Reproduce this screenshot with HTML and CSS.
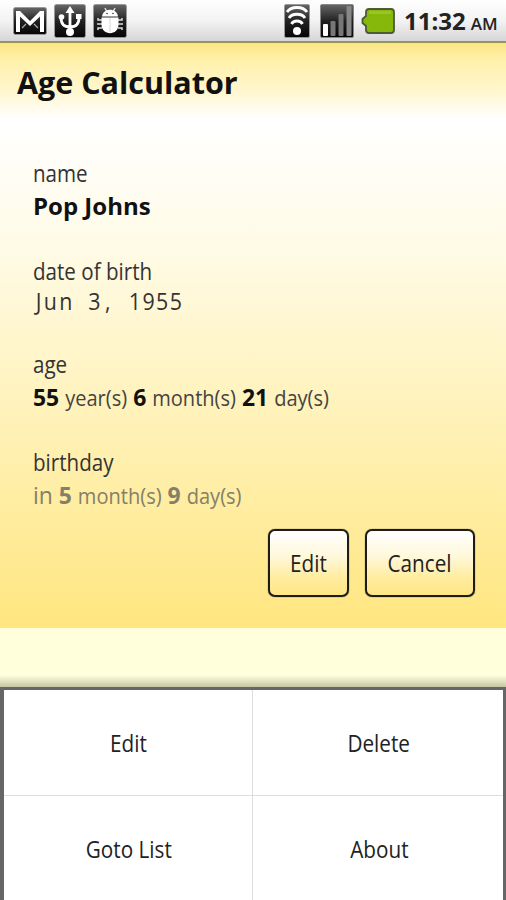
FILE: index.html
```html
<!DOCTYPE html>
<html lang="en">
<head>
    <meta charset="UTF-8">
    <meta name="viewport" content="width=device-width, initial-scale=1.0">
    <title>Age Calculator</title>
    <link rel="stylesheet" href="styles.css">
</head>
<body>

    <div class="status-bar">
        <svg class="icon-mail" width="34" height="28" viewBox="0 0 34 28">
            <defs>
                <linearGradient id="dark" x1="0" y1="0" x2="0" y2="1">
                    <stop offset="0" stop-color="#666"/>
                    <stop offset="0.5" stop-color="#222"/>
                    <stop offset="1" stop-color="#050505"/>
                </linearGradient>
            </defs>
            <rect x="0.5" y="0.5" width="33" height="27" rx="2" fill="url(#dark)" stroke="#999"/>
            <path d="M3 25V4h4l10 10L27 4h4v21h-4V9.500L17 19 7 9.500V25z" fill="#fff"/>
            <path d="M9 21l4-4M25 21l-4-4" stroke="#aaa" stroke-width="1.2"/>
        </svg>
        <svg class="icon-usb" width="32" height="34" viewBox="0 0 32 34">
            <rect x="0.5" y="0.5" width="31" height="33" rx="2" fill="url(#dark)" stroke="#999"/>
            <path d="M16 28V7M16 23c-6 0-9-3-9-9M16 23c6 0 9-3 9-9" fill="none" stroke="#fff" stroke-width="2.8"/>
            <path d="M11.500 9L16 2l4.500 7z" fill="#fff"/>
            <circle cx="16" cy="28" r="4" fill="#fff"/>
            <circle cx="7.500" cy="13" r="2.8" fill="#fff"/>
            <rect x="22" y="10" width="5.500" height="5" fill="#fff"/>
        </svg>
        <svg class="icon-bug" width="34" height="34" viewBox="0 0 34 34">
            <rect x="0.5" y="0.5" width="33" height="33" rx="2" fill="url(#dark)" stroke="#999"/>
            <path d="M12 4l2 4M22 4l-2 4M9 16H5v-2M9 20H4M9 24H5v2M25 16h4v-2M25 20h5M25 24h4v2" fill="none" stroke="#ddd" stroke-width="1.5"/>
            <path d="M9 12.500c1-9 15-9 16 0z" fill="#fff"/>
            <path d="M8.500 13.500h17v7c0 11.500-17 11.500-17 0z" fill="#fff"/>
            <path d="M17 14v14" stroke="#ccc" stroke-width="0.8"/>
            <circle cx="14" cy="9.500" r="0.8" fill="#333"/>
            <circle cx="20" cy="9.500" r="0.8" fill="#333"/>
        </svg>
        <svg class="icon-wifi" width="26" height="34" viewBox="0 0 26 34">
            <rect x="0.5" y="0.5" width="25" height="33" rx="1.500" fill="url(#dark)" stroke="#999"/>
            <path d="M3 8c4-6 16-6 20 0M5 14c3-5 13-5 16 0M7.500 20c2-4 9-4 11 0" fill="none" stroke="#fff" stroke-width="2.800"/>
            <circle cx="13" cy="27" r="4" fill="#fff"/>
        </svg>
        <svg class="icon-signal" width="34" height="34" viewBox="0 0 34 34">
            <rect x="0.5" y="0.5" width="33" height="33" rx="1.500" fill="url(#dark)" stroke="#888"/>
            <rect x="3" y="20" width="5" height="12" rx="1" fill="#fff"/>
            <rect x="10.500" y="17" width="5" height="15" rx="1" fill="#777"/>
            <rect x="18.500" y="10" width="5" height="22" rx="1" fill="#777"/>
            <rect x="26.500" y="2" width="5" height="30" rx="1" fill="#888"/>
        </svg>
        <svg class="icon-battery" width="34" height="26" viewBox="0 0 34 26">
            <path d="M8 1h22q3 0 3 3v18q0 3-3 3H8q-3 0-3-3v-4L1.500 15v-4L5 8V4q0-3 3-3z" fill="#86b80c" stroke="#4c5a35" stroke-width="1.800"/>
            <path d="M8 3h22v3H8z" fill="#98c42a"/>
        </svg>
        <div class="clock">11:32<span class="ampm">AM</span></div>
    </div>

    <header>
        <h1>Age Calculator</h1>
    </header>

    <main>
        <div class="field">
            <div class="label">name</div>
            <div class="value name">Pop Johns</div>
        </div>
        <div class="field field-date">
            <div class="label">date of birth</div>
            <div class="value date"><span class="month">Jun</span> <span class="day">3,</span> 1955</div>
        </div>
        <div class="field">
            <div class="label">age</div>
            <div class="value"><b>55</b> <small>year(s)</small> <b>6</b> <small>month(s)</small> <b>21</b> <small>day(s)</small></div>
        </div>
        <div class="field">
            <div class="label">birthday</div>
            <div class="value birthday">in <b>5</b> <small>month(s)</small> <b>9</b> <small>day(s)</small></div>
        </div>
        <div class="buttons">
            <button type="button" class="btn btn-edit"><span>Edit</span></button>
            <button type="button" class="btn btn-cancel"><span>Cancel</span></button>
        </div>
    </main>

    <div class="spacer"></div>

    <nav class="menu">
        <a class="menu-item"><span>Edit</span></a>
        <a class="menu-item"><span>Delete</span></a>
        <a class="menu-item"><span>Goto List</span></a>
        <a class="menu-item"><span>About</span></a>
    </nav>

</body>
</html>
```

FILE: styles.css
```css
* { box-sizing: border-box; margin: 0; padding: 0; }
body { width: 506px; height: 900px; overflow: hidden; background: #ffffdc; color: #111; font-family: 'Open Sans', 'Noto Sans', sans-serif; }

.status-bar { display: flex; align-items: center; height: 41px; padding: 0 8px 0 13px; background: linear-gradient(#fff, #f3f3f3 50%, #d6d6d8); }
.status-bar svg { flex: none; }
.icon-usb { margin-left: 7px; }
.icon-bug { margin-left: 7px; }
.icon-wifi { margin-left: 157px; }
.icon-signal { margin-left: 10px; }
.icon-battery { margin-left: 7px; }
.clock { margin-left: 9px; padding-top: 3px; font-size: 24px; font-weight: 700; line-height: 40px; white-space: nowrap; color: #222; }
.ampm { font-size: 17px; font-weight: 600; margin-left: 5px; }

header { height: 79px; padding: 23px 17px 0; border-top: 2px solid #98955a; background: linear-gradient(#fae584, #fff0a8 20%, #fff6cc 60%, #fff 100%); }
h1 { font-size: 31px; line-height: 32px; font-weight: 700; white-space: nowrap; transform: scaleX(0.983); transform-origin: left; }

main { height: 508px; padding: 37px 31px 0 33px; background: linear-gradient(#fff, #fffbe6 25%, #fff0b0 65%, #ffe680); }
.field { height: 98px; }
.field-date { height: 93px; }
.label { font-size: 23px; line-height: 32px; color: #333; transform: scaleX(0.895); transform-origin: left; }
.value { font-size: 24px; line-height: 34px; white-space: nowrap; transform: scaleX(0.955); transform-origin: left; }
.name { font-weight: 700; transform: none; }
.date { font-size: 23px; line-height: 28px; letter-spacing: 1.5px; word-spacing: 7px; color: #333; transform: scaleX(0.93); }
.month { letter-spacing: 2.5px; margin-left: 3px; }
.day { letter-spacing: 5px; }
.value small { font-size: 21px; color: #444; }
.birthday, .birthday small { color: #857f68; }

.buttons { display: flex; justify-content: flex-end; gap: 16px; margin-top: -15px; }
.btn { height: 68px; border: 2px solid #1c1c18; border-radius: 7px; box-shadow: 0 0 1px #1c1c18; background: linear-gradient(#fff, #fff8da 40%, #ffec9c 75%, #ffe785); font-family: inherit; font-size: 23px; color: #222; }
.btn span, .menu-item span { display: inline-block; transform: scaleX(0.9); }
.btn-edit { width: 81px; }
.btn-cancel { width: 110px; }

.spacer { height: 59px; background: linear-gradient(#ffffdc 80%, #c6c6a5); }

.menu { display: grid; grid-template-columns: 249px 250px; grid-template-rows: 106px 106px; height: 213px; border: solid #666; border-width: 3px 3px 0 4px; background: #fff; }
.menu-item { display: flex; align-items: center; justify-content: center; font-size: 23px; color: #222; border-bottom: 1px solid #ddd; }
.menu-item:nth-child(odd) { border-right: 1px solid #ddd; padding-left: 1px; }
.menu-item:nth-child(even) { padding-left: 2px; }
```
